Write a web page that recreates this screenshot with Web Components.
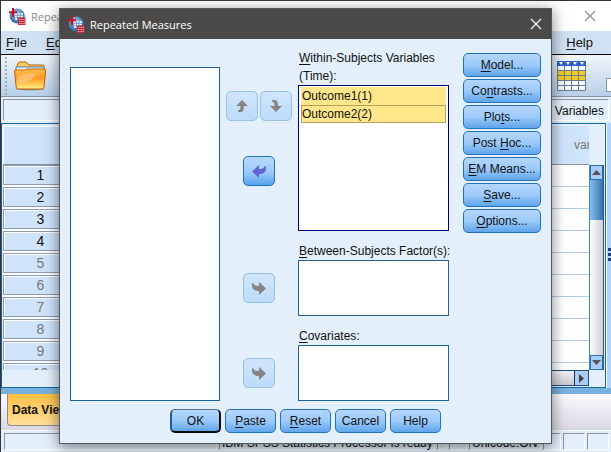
<!DOCTYPE html>
<html lang="en">
<head>
<meta charset="utf-8">
<title>Repeated Measures</title>
<style>
html,body{margin:0;height:100%;overflow:hidden}
body{background:#35343a;font:12px "Liberation Sans",Arial,sans-serif;color:#111}
u{text-underline-offset:2px}
</style>
</head>
<body>
<app-window>
  <stats-dialog>
    <list-field slot="source" name="Variables"></list-field>
    <arrow-button slot="order" dir="up" label="Move up" disabled></arrow-button>
    <arrow-button slot="order" dir="down" label="Move down" disabled></arrow-button>
    <arrow-button slot="within-move" dir="left" label="Remove from within-subjects variables"></arrow-button>
    <list-field slot="within" items="Outcome1(1)|Outcome2(2)" active><u>W</u>ithin-Subjects Variables<br>(Time):</list-field>
    <arrow-button slot="between-move" dir="right" label="Add factor" disabled></arrow-button>
    <list-field slot="between"><u>B</u>etween-Subjects Factor(s):</list-field>
    <arrow-button slot="cov-move" dir="right" label="Add covariate" disabled></arrow-button>
    <list-field slot="cov"><u>C</u>ovariates:</list-field>
    <push-button slot="options"><u>M</u>odel...</push-button>
    <push-button slot="options">Co<u>n</u>trasts...</push-button>
    <push-button slot="options">Plo<u>t</u>s...</push-button>
    <push-button slot="options">Post <u>H</u>oc...</push-button>
    <push-button slot="options"><u>E</u>M Means...</push-button>
    <push-button slot="options"><u>S</u>ave...</push-button>
    <push-button slot="options"><u>O</u>ptions...</push-button>
    <push-button slot="actions" default>OK</push-button>
    <push-button slot="actions"><u>P</u>aste</push-button>
    <push-button slot="actions"><u>R</u>eset</push-button>
    <push-button slot="actions">Cancel</push-button>
    <push-button slot="actions">Help</push-button>
  </stats-dialog>
</app-window>
<script>
const define = (name, html, setup) => {
  const t = document.createElement('template');
  t.innerHTML = html;
  customElements.define(name, class extends HTMLElement {
    constructor() {
      super();
      this.attachShadow({mode: 'open'}).append(t.content.cloneNode(true));
    }
    connectedCallback() { if (setup) setup(this, this.shadowRoot); }
  });
};

define('app-logo', `
<style>:host{display:block;width:17px;height:17px}svg{display:block}</style>
<svg width="17" height="17" viewBox="0 0 17 17" aria-hidden="true">
  <defs><radialGradient id="g" cx=".45" cy=".35"><stop offset="0" stop-color="#a9cdea"/><stop offset="1" stop-color="#3f77ad"/></radialGradient></defs>
  <circle cx="8.2" cy="8" r="7.6" fill="url(#g)"/>
  <path d="M6 5h8v7H6z" fill="#e4eef8"/>
  <path d="M6 7.3h8M6 9.7h8M8.5 5v7M11 5v7" stroke="#648fbd" stroke-width=".8"/>
  <path d="M4 0v9M0 4.200h8" stroke="#c8102e" stroke-width="2"/>
  <path d="M9 9.500h7.500V17H9z" fill="#c62a42"/>
  <path d="M10.3 11.500h1M12.5 11.500h1M14.6 11.500h1M10.3 13.500h1M12.5 13.500h1M14.6 13.500h1M10.3 15.500h1M12.5 15.500h1M14.6 15.500h1" stroke="#ffdadd" stroke-width="1"/>
</svg>`);

define('title-bar', `
<style>
:host{display:flex;align-items:center;box-sizing:border-box;height:30px;padding:0 15px 0 8px;gap:5px;background:#fff;color:#8d8d8d;font:11px "Open Sans","Noto Sans",sans-serif}
:host([dark]){background:#4b4a48;color:#fff;padding:0 9px 0 8px}
span{flex:1}
button{border:0;padding:0;background:none;color:inherit;width:12px;height:12px}
svg{display:block}
</style>
<app-logo></app-logo><span><slot></slot></span>
<button aria-label="Close"><svg width="12" height="12" viewBox="0 0 12 12"><path d="M1 1l10 10M11 1L1 11" stroke="currentColor" stroke-width="1.1"/></svg></button>`);

define('push-button', `
<style>
:host{display:block}
button{display:block;box-sizing:border-box;width:100%;height:24px;padding:0;border:1px solid #2274b8;border-radius:5px;
 background:linear-gradient(#b4d6fb,#9ccafa 50%,#5fa5ea);font:inherit;color:#111;white-space:nowrap}
:host([default]) button{border-width:1px 2px 2px 2px;border-color:#5b6f85 #080808 #080808 #245a8c}
</style>
<button type="button"><slot></slot></button>`);

define('arrow-button', `
<style>
:host{display:block;width:32px;height:30px}
button{display:grid;place-items:center;box-sizing:border-box;width:100%;height:100%;padding:0;border:1px solid #1f70b4;border-radius:5px;
 background:linear-gradient(#b9d9fc,#9ccafa 55%,#55a2ee);color:#6464cc}
button:disabled{border-color:#94c1e8;background:linear-gradient(#d0e5fc,#bcdbfa);color:#858585}
svg{display:block}
:host([dir=right]) svg{transform:scaleX(-1)}
</style>
<button type="button"><svg width="16" height="14" viewBox="0 0 16 14" aria-hidden="true"><path fill="currentColor"/></svg></button>`,
(el, root) => {
  const side = 'M1 7.500L8 1v4c3 0 5-.5 5.500-2.500L15 2v3c-.5 3.500-3 5-7 5v4z';
  const shapes = {
    left: side,
    right: side,
    up: 'M8 1l6 6h-4c0 4-1 6-3.500 6H4v-1.500C6 11 6.500 10 6.500 7H2z',
    down: 'M8 13l6-6h-4c0-4-1-6-3.500-6H4v1.500C6 3 6.500 4 6.500 7H2z'
  };
  root.querySelector('path').setAttribute('d', shapes[el.getAttribute('dir')]);
  const b = root.querySelector('button');
  b.disabled = el.hasAttribute('disabled');
  b.setAttribute('aria-label', el.getAttribute('label'));
});

define('list-field', `
<style>
:host{display:flex;flex-direction:column;min-width:0;min-height:0}
label{line-height:18px;white-space:nowrap;padding-left:1px}
select{flex:1 1 0;display:block;box-sizing:border-box;width:100%;height:0;min-height:0;margin:0;padding:1px 2px;border:1px solid #1e62a0;border-radius:0;background:#fff;font:inherit;color:#111;outline:0;overflow:hidden;appearance:none}
:host([active]) select{border-color:#00007c}
option{box-sizing:border-box;height:18px;padding:2px 1px 0;border-radius:0}
option:checked{background:linear-gradient(#fee68b,#fee68b);color:#111}
option:last-child{border:1px solid #b4a05a;padding:1px 0 0}
</style>
<label for="list"><slot></slot></label><select id="list" multiple></select>`,
(el, root) => {
  const s = root.querySelector('select');
  if (el.hasAttribute('name')) { root.querySelector('label').remove(); s.setAttribute('aria-label', el.getAttribute('name')); }
  const items = el.getAttribute('items');
  if (items && !s.length) items.split('|').forEach(i => s.add(new Option(i, i, true, true)));
});

define('stats-dialog', `
<style>
:host{display:block;box-sizing:border-box;border:1px solid #55585c;background:#e3effb;box-shadow:0 3px 14px rgba(0,0,0,.5)}
main{display:grid;grid-template-columns:150fr 78px 151fr 92px;grid-template-rows:182px 74px 74px;row-gap:11px;padding:10px 10px 0}
.source{grid-row:1/4;padding-top:18px;display:grid}
.within,.between,.cov{grid-column:3;display:grid}
.source,.within,.between,.cov{grid-template-rows:minmax(0,1fr);min-height:0}
.moves{grid-column:2;margin:0 6px;display:flex;justify-content:center;align-items:center;padding-top:18px}
.moves.first{flex-direction:column;justify-content:flex-start;padding-top:42px;gap:35px}
.pair{display:flex;gap:2px}
.options{grid-column:4;grid-row:1/4;display:flex;flex-direction:column;gap:2px;padding:4px 0 0 14px}
footer{display:flex;justify-content:center;gap:4px;padding:8px 10px 10px}
footer ::slotted(*){width:51px}
</style>
<title-bar dark>Repeated Measures</title-bar>
<main>
  <div class="source"><slot name="source"></slot></div>
  <div class="moves first"><div class="pair"><slot name="order"></slot></div><slot name="within-move"></slot></div>
  <div class="within"><slot name="within"></slot></div>
  <div class="options"><slot name="options"></slot></div>
  <div class="moves"><slot name="between-move"></slot></div>
  <div class="between"><slot name="between"></slot></div>
  <div class="moves"><slot name="cov-move"></slot></div>
  <div class="cov"><slot name="cov"></slot></div>
</main>
<footer><slot name="actions"></slot></footer>`);

define('menu-bar', `
<style>
:host{display:flex;justify-content:space-between;height:23px;align-items:center;padding:0 18px 0 5px;background:#cfe1f2;border-bottom:1px solid #080808}
nav{display:flex;gap:19px}
button{border:0;padding:0;background:none;font:13px "Liberation Sans",Arial,sans-serif;color:#111}
u{text-underline-offset:2px}
</style>
<nav><button><u>F</u>ile</button><button><u>E</u>dit</button></nav><nav><button><u>H</u>elp</button></nav>`);

define('tool-bar', `
<style>
:host{display:flex;align-items:center;box-sizing:border-box;height:42px;padding-left:4px;background:linear-gradient(#f1f6fb,#b7cfe7);border-bottom:1px solid #8a929b;overflow:hidden}
i{width:2px;height:38px;margin-right:6px;background:repeating-linear-gradient(#a3afbd 0 2px,transparent 2px 4px)}
button{border:0;padding:0;background:none}
svg{display:block}
.gap{flex:1}
.next{width:5px;height:14px;margin:18px 0 0 20px;background:#fff;border:1px solid #8d98a5;border-right:0;box-sizing:border-box}
</style>
<i></i>
<button aria-label="Open"><svg width="34" height="30" viewBox="0 0 34 30">
 <defs><linearGradient id="f" x2="0" y2="1"><stop stop-color="#ffbe52"/><stop offset=".45" stop-color="#ff9a1e"/><stop offset="1" stop-color="#fff08a"/></linearGradient></defs>
 <ellipse cx="17" cy="28" rx="14" ry="1.500" fill="#6c5a48" opacity=".6"/>
 <path d="M3 9l2-7q1-1 2-1h6l3 3h14q1 0 1 1v5H3z" fill="#ffcb58" stroke="#c26508"/>
 <path d="M3 9V6h28v5H3z" fill="#e9f3fc" stroke="#3f81b8"/>
 <path d="M1.500 10q0-1 1-1h9l3-1h17q1.500 0 1.200 1.500L31 26q0 2-2 2H5q-1.500 0-1.800-2z" fill="url(#f)" stroke="#c2600a"/>
 <path d="M4 16q9-5 19-3-2 7-17 9z" fill="#fff" opacity=".3"/>
</svg></button>
<span class="gap"></span>
<button aria-label="Select cases"><svg width="29" height="30" viewBox="0 0 29 30">
 <path d="M0 0h29v30H0z" fill="#f6f9fc"/><path d="M0 0h29v5H0z" fill="#2f62c4"/><path d="M0 9h29v11H0z" fill="#f5cb25"/>
 <path d="M2 1h4l-2 3zM9 1h4l-2 3zM16 1h4l-2 3zM23 1h4l-2 3z" fill="#fff"/>
 <path d="M.5 5v24.500h28V5M7.500 5v25M14.500 5v25M21.500 5v25M0 9.500h29M0 14.500h29M0 19.500h29M0 24.500h29" fill="none" stroke="#687b91"/>
</svg></button><span class="next"></span>`);

define('count-bar', `
<style>
:host{display:block;height:26px;padding:2px;box-sizing:border-box;background:#e3effb}
div{height:22px;box-sizing:border-box;border:1px solid #8f969d;border-right-color:#fff;border-bottom-color:#fff;line-height:22px;text-align:right;padding-right:4px}
</style><div>Variables</div>`);

define('data-grid', `
<style>
:host{flex:1;min-height:0;display:flex;background:#e3effb;border-left:1px solid #1b5589}
.frame{flex:1;min-width:0;display:flex;flex-direction:column;border:1px solid #1668a4;border-left:0;padding:2px 1px 1px 1px}
.row{display:flex;flex:1;min-height:0}
.view{flex:1;min-width:0;overflow:hidden;background:#fff}
table{width:100%;table-layout:fixed;border-collapse:separate;border-spacing:0}
th,td{padding:0;font-weight:400;overflow:hidden}
thead th{height:38px;background:#cfe3fb;border-bottom:1px solid #8a93a0;color:#777;text-align:left}
thead th:first-child{box-shadow:inset 1px 1px #fff}
tbody tr{height:22px}
tbody th{background:#fff}
tbody td{border-bottom:1px solid #b3cbe6}
.n{box-sizing:border-box;height:20px;margin-bottom:2px;border:1px solid #8b9bb0;box-shadow:inset 1px 1px #fff;background:#cfe3fb;font-size:14px;line-height:18px;color:#777}
.on .n{color:#111}
.first{width:75px}.last{width:15px}
.v{display:flex;flex-direction:column;width:15px;margin-top:39px;box-sizing:border-box;border-left:1px solid #3b87d2;border-right:1px solid #2c5a86;background:linear-gradient(90deg,#fff,#cfcdda)}
button{border:1px solid #2b6fb2;padding:0;background:#a8cdf8;height:15px;flex:none;display:grid;place-items:center;box-sizing:border-box}
button svg{display:block}
.thumb{height:40px;background:linear-gradient(90deg,#8abdf0,#3572b0)}
.track{flex:1}
.h{display:flex;height:14px;margin:0 15px 0 75px;border:1px solid #1d4e7d;background:linear-gradient(#f2f2f6,#c9c7d4)}
.h button{width:14px;height:14px;border:0;border-left:1px solid #1d2f50}
.split{width:4px;background:#b2d6fb;border-left:1px solid #fff;display:grid;place-items:center}
.split i{width:3px;height:15px;background:repeating-linear-gradient(#23407c 0 3px,transparent 3px 5px)}
</style>
<div class="frame">
 <div class="row">
  <div class="view"><table><thead><tr><th class="first"></th><th></th><th class="last">var</th></tr></thead><tbody></tbody></table></div>
  <div class="v"><button aria-label="Scroll up"><svg width="9" height="5"><path d="M0 5L4.500 0 9 5z" fill="#555"/></svg></button><div class="thumb"></div><div class="track"></div><button aria-label="Scroll down"><svg width="9" height="5"><path d="M0 0l4.500 5L9 0z" fill="#555"/></svg></button></div>
 </div>
 <div class="h"><div class="track"></div><button aria-label="Scroll right"><svg width="5" height="9"><path d="M0 0l5 4.500L0 9z" fill="#444"/></svg></button></div>
</div>
<div class="split"><i></i></div>`,
(el, root) => {
  root.querySelector('tbody').innerHTML = Array.from({length: 10}, (_, i) =>
    `<tr class="${i < 4 ? 'on' : ''}"><th scope="row"><div class="n">${i + 1}</div></th><td></td><td></td></tr>`).join('');
});

define('tab-strip', `
<style>
:host{display:block;box-sizing:border-box;height:42px;padding-left:6px;border-top:6px solid #78b0de;background:linear-gradient(#fafafe,#d9d7e4)}
button{height:32px;padding:0 5px 0 4px;border:1px solid #8f8b80;border-top:0;border-radius:0 0 4px 4px;background:linear-gradient(#fdc043,#fee09a);font:bold 12px "Liberation Sans",Arial,sans-serif;color:#111}
</style><button>Data View</button>`);

define('status-bar', `
<style>
:host{display:flex;height:22px;box-sizing:border-box;padding:2px 2px 2px 3px;gap:2px;background:#e3effb;border-top:1px solid #f4f8fc}
span{box-sizing:border-box;border:1px solid #8f969d;border-right-color:#fff;border-bottom-color:#fff;padding-left:2px;line-height:18px;white-space:nowrap}
.fill{flex:1}.msg{width:216px}.xs{width:10px}.s{width:18px}.m{width:22px}.code{width:72px}
</style>
<span class="fill"></span><span class="msg">IBM SPSS Statistics Processor is ready</span><span class="xs"></span><span class="s"></span><span class="code">Unicode:ON</span><span class="s"></span><span class="m"></span><span class="m"></span>`);

define('app-window', `
<style>
:host{position:relative;display:flex;flex-direction:column;box-sizing:border-box;height:100vh;padding:1px 0 0 1px}
.dialog{position:absolute;left:59px;right:59px;top:8px}
</style>
<title-bar>Repeated</title-bar><menu-bar></menu-bar><tool-bar></tool-bar><count-bar></count-bar>
<data-grid></data-grid><tab-strip></tab-strip><status-bar></status-bar>
<div class="dialog"><slot></slot></div>`);
</script>
</body>
</html>
